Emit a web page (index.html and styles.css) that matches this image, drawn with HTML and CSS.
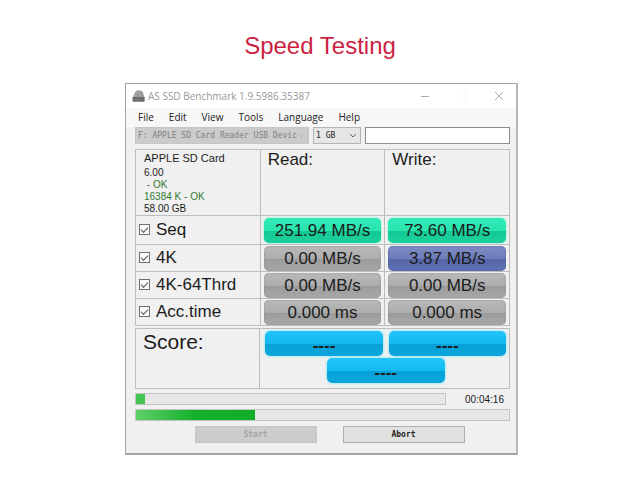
FILE: index.html
```
<!DOCTYPE html>
<html lang="en">

<head>
  <meta charset="UTF-8">
  <meta name="viewport" content="width=device-width, initial-scale=1.0">
  <title>Speed Testing</title>
  <link rel="stylesheet" href="styles.css">
</head>

<body>
  <h1>Speed Testing</h1>
  <main class="window">
    <header class="titlebar">
      <svg class="app-icon" viewBox="0 0 12 11" aria-hidden="true">
        <path d="M3 1.5 4.5.5h4L10 2l1.5 5H.8z" fill="#999" />
        <path d="M.5 6.5h11.2V10l-.7.7H1L.5 10z" fill="#6c6c6c" />
        <path d="M4.5 1.5 3 6M7 1.5V6" stroke="#b5b5b5" stroke-width=".8" />
        <path d="M2 8.6h4" stroke="#888" stroke-width=".8" />
      </svg>
      <span class="title">AS SSD Benchmark 1.9.5986.35387</span>
      <div class="window-buttons">
        <button type="button" aria-label="Minimize">
          <svg viewBox="0 0 10 10"><path d="M1 5.5h8" stroke="#aaa" /></svg>
        </button>
        <button type="button" aria-label="Maximize" disabled>
          <svg viewBox="0 0 10 10"><path d="M1.5 1.5h7v7h-7z" fill="none" stroke="#f5f5f5" /></svg>
        </button>
        <button type="button" aria-label="Close">
          <svg viewBox="0 0 10 10"><path d="M1 1l8 8M9 1L1 9" stroke="#aaa" /></svg>
        </button>
      </div>
    </header>

    <nav class="menu">
      <a href="#">File</a>
      <a href="#">Edit</a>
      <a href="#">View</a>
      <a href="#">Tools</a>
      <a href="#">Language</a>
      <a href="#">Help</a>
    </nav>

    <div class="content">
      <div class="toolbar">
        <div class="dropdown drive">
          <select aria-label="Drive" disabled>
            <option>F: APPLE SD Card Reader USB Devic</option>
          </select>
          <svg viewBox="0 0 8 6"><path d="M1 1l3 3 3-3" /></svg>
        </div>
        <div class="dropdown size">
          <select aria-label="Test size">
            <option>1 GB</option>
          </select>
          <svg viewBox="0 0 8 6"><path d="M1 1l3 3 3-3" /></svg>
        </div>
        <input type="text" class="filter" aria-label="Notes">
      </div>

      <table class="results">
        <thead>
          <tr>
            <td class="drive-info">
              <p class="drive-name">APPLE SD Card</p>
              <p>6.00</p>
              <p class="ok">&nbsp;- OK</p>
              <p class="ok">16384 K - OK</p>
              <p>58.00 GB</p>
            </td>
            <th scope="col">Read:</th>
            <th scope="col">Write:</th>
          </tr>
        </thead>
        <tbody>
          <tr class="sequential">
            <th scope="row"><label><input type="checkbox" checked>Seq</label></th>
            <td><div class="value green">251.94 MB/s</div></td>
            <td><div class="value green">73.60 MB/s</div></td>
          </tr>
          <tr>
            <th scope="row"><label><input type="checkbox" checked>4K</label></th>
            <td><div class="value">0.00 MB/s</div></td>
            <td><div class="value blue">3.87 MB/s</div></td>
          </tr>
          <tr>
            <th scope="row"><label><input type="checkbox" checked>4K-64Thrd</label></th>
            <td><div class="value">0.00 MB/s</div></td>
            <td><div class="value">0.00 MB/s</div></td>
          </tr>
          <tr>
            <th scope="row"><label><input type="checkbox" checked>Acc.time</label></th>
            <td><div class="value">0.000 ms</div></td>
            <td><div class="value">0.000 ms</div></td>
          </tr>
        </tbody>
      </table>

      <section class="score">
        <h2>Score:</h2>
        <div class="score-values">
          <div class="value cyan">----</div>
          <div class="value cyan">----</div>
          <div class="value cyan total">----</div>
        </div>
      </section>

      <div class="progress-row">
        <progress class="step" value="3" max="100" aria-label="Current test"></progress>
        <span class="time">00:04:16</span>
      </div>
      <div class="progress-row">
        <progress value="32" max="100" aria-label="Whole benchmark"></progress>
      </div>

      <div class="actions">
        <button type="button" disabled>Start</button>
        <button type="button">Abort</button>
      </div>
    </div>
  </main>
</body>

</html>
```
FILE: styles.css
```
*,
*::before,
*::after {
  box-sizing: border-box;
}

:root {
  --line: #bdbdbd;
  --panel: #f0f0f0;
  --text: #1c1c1c;
  --ok: #2f7d32;
}

body {
  margin: 0;
  padding: 32px 122px 27px 125px;
  background: #fff;
  color: var(--text);
  font-family: "Liberation Sans", Arial, sans-serif;
}

h1,
h2,
p {
  margin: 0;
  font-weight: normal;
}

h1 {
  margin-bottom: 23px;
  padding-right: 3px;
  color: #cb1f42;
  font-size: 24px;
  line-height: 28px;
  text-align: center;
}

.window {
  border: 1px solid #a3a3a3;
  border-right: 2px solid #b5b5b5;
  border-bottom: 2px solid #a3a3a3;
  background: var(--panel);
}

.titlebar {
  display: flex;
  align-items: center;
  gap: 3px;
  height: 24px;
  padding: 0 7px 0 6px;
  background: #fff;
}

.app-icon {
  width: 13px;
  height: 12px;
}

.title {
  color: #999;
  font-family: "Open Sans", sans-serif;
  font-size: 10px;
}

.window-buttons {
  display: flex;
  gap: 17px;
  margin-left: auto;
}

.window-buttons button {
  display: flex;
  justify-content: center;
  width: 20px;
  padding: 0;
  border: 0;
  background: none;
}

.window-buttons svg {
  width: 10px;
  height: 10px;
}

.menu {
  display: flex;
  gap: 15px;
  height: 19px;
  padding: 0 12px;
  background: #f7f7f7;
  font-family: "Open Sans", sans-serif;
  font-size: 10px;
  font-weight: 500;
  line-height: 19px;
}

.menu a {
  color: #222;
  text-decoration: none;
}

.content {
  padding: 0 6px 10px 9px;
}

.toolbar {
  display: flex;
  gap: 4px;
  height: 17px;
  margin-bottom: 5px;
}

.dropdown {
  display: flex;
  position: relative;
}

.dropdown select {
  width: 100%;
  margin: 0;
  padding: 0 2px;
  border: 1px solid #b5b5b5;
  border-radius: 0;
  appearance: none;
  background: #e6e6e6;
  color: #222;
  font: 8px "DejaVu Sans Mono", monospace;
}

.dropdown svg {
  position: absolute;
  top: 6px;
  right: 4px;
  width: 8px;
  height: 6px;
  fill: none;
  stroke: #666;
  pointer-events: none;
}

.dropdown select:disabled {
  border-color: #c6c6c6;
  background: #cbcbcb;
  color: #808080;
  opacity: 1;
}

.dropdown select:disabled + svg {
  stroke: #b5b5b5;
}

.drive {
  flex: 0 0 174px;
}

.size {
  flex: 0 0 48px;
}

.filter {
  flex: 1;
  min-width: 0;
  border: 1px solid #8c8c8c;
  background: #fff;
}

.results {
  width: 100%;
  border-collapse: collapse;
  table-layout: fixed;
  font-size: 17px;
}

.results th,
.results td {
  height: 27px;
  padding: 0;
  border: 1px solid var(--line);
  font-weight: normal;
  text-align: left;
}

.results .sequential td,
.results .sequential th {
  height: 29px;
}

.results thead th {
  padding: 0 7px;
  line-height: 20px;
  vertical-align: top;
}

.results tbody td {
  padding: 0 3px;
}

.results .drive-info {
  padding: 0 8px;
  font-size: 10px;
  line-height: 12px;
  vertical-align: top;
}

.drive-info .drive-name {
  font-size: 11px;
  line-height: 17px;
}

.drive-info .ok {
  color: var(--ok);
}

.results label {
  display: flex;
  align-items: center;
  gap: 6px;
  padding-left: 3px;
  line-height: 24px;
}

.results input {
  position: relative;
  width: 11px;
  height: 11px;
  margin: 0 0 2px;
  border: 1px solid #6f6f6f;
  appearance: none;
  background: #fafafa;
}

.results input:checked::after {
  content: "";
  position: absolute;
  top: 2px;
  left: 1px;
  width: 7px;
  height: 4px;
  border: solid #555;
  border-width: 0 0 1px 1px;
  transform: rotate(-45deg);
}

.value {
  height: 25px;
  border-radius: 5px;
  background: linear-gradient(#b9b9b9, #adadad 50%, #9b9b9b 52%, #a8a8a8);
  box-shadow: inset 0 0 2px #8f8f8f;
  font-size: 17px;
  line-height: 26px;
  text-align: center;
}

.value.green {
  background: linear-gradient(#2eeab4, #2be5af 50%, #12c993 52%, #1cd09b);
  box-shadow: 0 0 2px #4df5c4;
}

.value.blue {
  background: linear-gradient(#7d8cc4, #6d7dba 50%, #5465a8 52%, #6272b4);
  box-shadow: inset 0 0 2px #4b5a98;
}

.value.cyan {
  background: linear-gradient(#22c4fb, #14b9f1 50%, #06a1d6 52%, #0ba6db);
  box-shadow: 0 0 3px #6fe6ff;
  font-weight: bold;
  line-height: 30px;
}

.score {
  display: grid;
  grid-template-columns: 1fr 2fr;
  margin-top: 2px;
  border: 1px solid var(--line);
}

.score h2 {
  padding-left: 7px;
  border-right: 1px solid var(--line);
  font-size: 21px;
  line-height: 26px;
}

.score-values {
  display: grid;
  grid-template-columns: 1fr 1fr;
  gap: 2px 6px;
  padding: 2px 3px 5px 5px;
}

.score .total {
  grid-column: 1 / 3;
  justify-self: center;
  width: 49%;
}

.progress-row {
  display: flex;
  align-items: center;
  height: 12px;
  margin-top: 4px;
}

progress {
  flex: 1;
  min-width: 0;
  height: 12px;
  border: 1px solid #c4c4c4;
  appearance: none;
  background: #e6e6e6;
}

progress::-webkit-progress-bar {
  background: #e6e6e6;
}

progress::-webkit-progress-value {
  background: linear-gradient(to right, #5fd068, #13b02c 50%, #10ad29);
}

.step::-webkit-progress-value {
  background: #43c453;
}

.time {
  flex: 0 0 64px;
  padding-right: 6px;
  font-size: 10px;
  text-align: right;
}

.actions {
  display: flex;
  justify-content: center;
  gap: 26px;
  margin-top: 5px;
  padding-left: 14px;
}

.actions button {
  width: 122px;
  height: 17px;
  padding: 0;
  border: 1px solid #adadad;
  background: #e1e1e1;
  color: #222;
  font: bold 8px "DejaVu Sans Mono", monospace;
}

.actions button:disabled {
  border-color: #c6c6c6;
  background: #cccccc;
  color: #a3a3a3;
}
```
